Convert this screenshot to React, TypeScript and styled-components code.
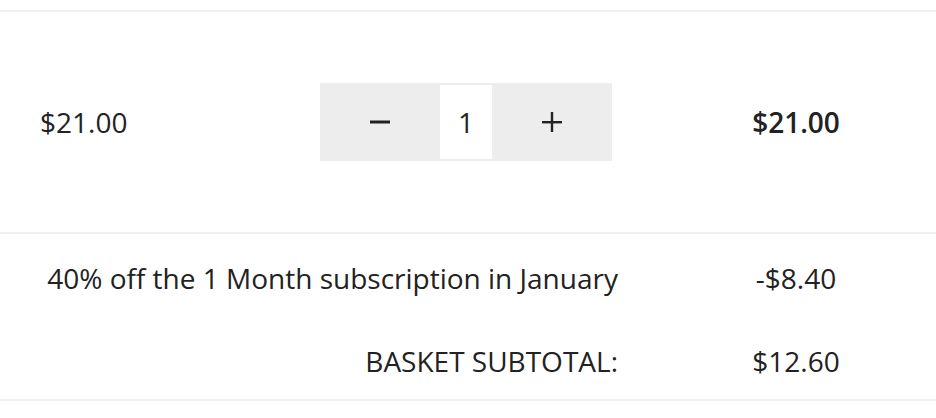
import React from 'react';
import styled, { createGlobalStyle } from 'styled-components';

const text = '#222222';
const rule = '#f0f0f0';
const stepperGrey = '#ededed';

const GlobalStyle = createGlobalStyle`
  html, body {
    margin: 0;
    padding: 0;
    background: #ffffff;
  }
  body {
    font-family: 'Open Sans', 'Liberation Sans', sans-serif;
    color: ${text};
  }
`;

const Basket = styled.div`
  width: 936px;
  padding-top: 10px;
`;

const ItemRow = styled.div`
  display: grid;
  grid-template-columns: 320px 336px 280px;
  align-items: center;
  height: 220px;
  border-top: 2px solid ${rule};
  border-bottom: 2px solid ${rule};
`;

const Cell = styled.div<{ $align?: 'left' | 'center' | 'right'; $bold?: boolean }>`
  font-size: 28px;
  line-height: 42px;
  text-align: ${(p) => p.$align || 'left'};
  font-weight: ${(p) => (p.$bold ? 600 : 400)};
`;

const PriceCell = styled(Cell)`
  padding-left: 40px;
`;

const Stepper = styled.div`
  display: grid;
  grid-template-columns: 120px 52px 120px;
  width: 292px;
  height: 78px;
  background: ${stepperGrey};
`;

const StepButton = styled.button`
  display: flex;
  align-items: center;
  justify-content: center;
  border: none;
  padding: 0;
  background: transparent;
  color: ${text};
  cursor: pointer;
`;

const QtyInput = styled.input`
  box-sizing: border-box;
  margin: 2px 0;
  height: 74px;
  width: 52px;
  border: none;
  padding: 0;
  background: #ffffff;
  text-align: center;
  font-family: 'Open Sans', 'Liberation Sans', sans-serif;
  font-size: 28px;
  color: ${text};
  outline: none;
`;

const Summary = styled.div`
  display: flex;
  flex-direction: column;
  gap: 41px;
  padding: 23px 0 17px;
  border-bottom: 2px solid ${rule};
`;

const SummaryRow = styled.div`
  display: grid;
  grid-template-columns: 1fr 280px;
  align-items: center;
`;

const Label = styled(Cell)<{ $caps?: boolean }>`
  padding-right: 38px;
  text-transform: ${(p) => (p.$caps ? 'uppercase' : 'none')};
`;

const MinusIcon = () => (
  <svg width="20" height="20" viewBox="0 0 20 20" aria-hidden="true">
    <rect x="0" y="8.5" width="20" height="3" fill="currentColor" />
  </svg>
);

const PlusIcon = () => (
  <svg width="20" height="20" viewBox="0 0 20 20" aria-hidden="true">
    <rect x="0" y="9" width="20" height="2.4" fill="currentColor" />
    <rect x="8.8" y="0" width="2.4" height="20" fill="currentColor" />
  </svg>
);

const App: React.FC = () => {
  const [qty, setQty] = React.useState(1);
  const unit = 21;
  const discount = 0.4 * unit * qty;

  return (
    <>
      <GlobalStyle />
      <Basket>
        <ItemRow>
          <PriceCell>${unit.toFixed(2)}</PriceCell>
          <Stepper>
            <StepButton onClick={() => setQty(Math.max(1, qty - 1))}>
              <MinusIcon />
            </StepButton>
            <QtyInput value={qty} readOnly />
            <StepButton onClick={() => setQty(qty + 1)}>
              <PlusIcon />
            </StepButton>
          </Stepper>
          <Cell $align="center" $bold>
            ${(unit * qty).toFixed(2)}
          </Cell>
        </ItemRow>
        <Summary>
          <SummaryRow>
            <Label $align="right">40% off the 1 Month subscription in January</Label>
            <Cell $align="center">-${discount.toFixed(2)}</Cell>
          </SummaryRow>
          <SummaryRow>
            <Label $align="right" $caps>
              Basket subtotal:
            </Label>
            <Cell $align="center">${(unit * qty - discount).toFixed(2)}</Cell>
          </SummaryRow>
        </Summary>
      </Basket>
    </>
  );
};

export default App;
